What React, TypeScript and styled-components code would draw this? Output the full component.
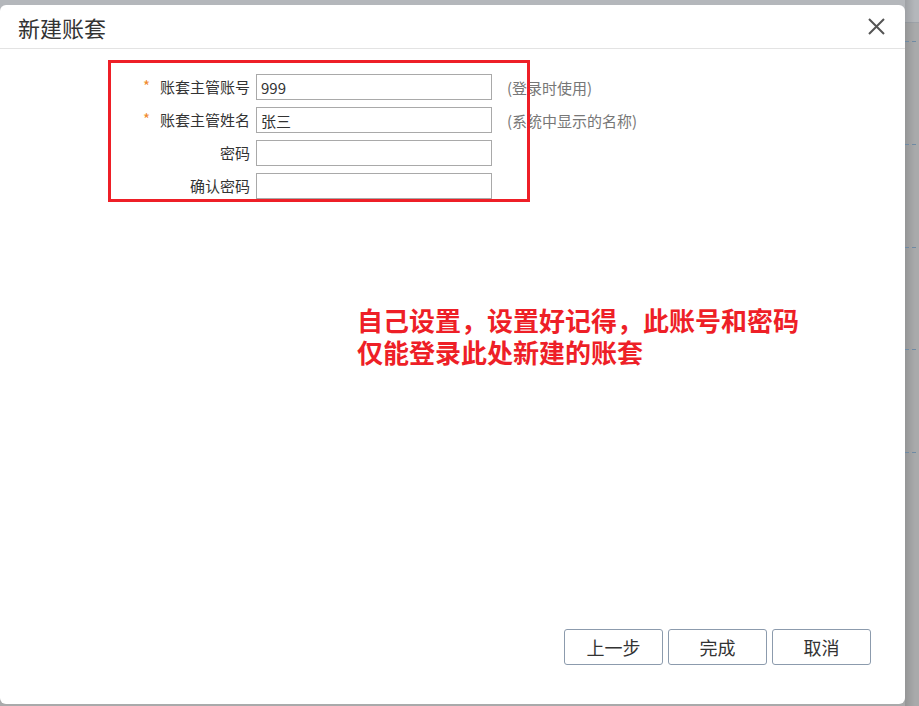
import React from "react";
import styled, { createGlobalStyle } from "styled-components";

const Global = createGlobalStyle`
  html, body { margin: 0; padding: 0; }
  body {
    width: 919px;
    height: 706px;
    overflow: hidden;
    font-family: "Noto Sans CJK SC", "Liberation Sans", sans-serif;
    background: linear-gradient(to bottom, #b4b7bb 0, #b4b7bb 22px, #9ea3a9 22px, #9ea3a9 23px, #a9aaab 23px);
  }
`;

const Page = styled.div`
  display: flex;
  align-items: flex-start;
  padding-top: 5px;
  height: 706px;
  box-sizing: border-box;
`;

const Dialog = styled.div`
  width: 905px;
  height: 699px;
  flex: none;
  background: #fff;
  border-radius: 6px;
  display: flex;
  flex-direction: column;
  box-sizing: border-box;
  position: relative;
`;

const Side = styled.div`
  flex: 1;
  align-self: stretch;
  margin-top: -5px;
  background: linear-gradient(to right, rgba(0,0,0,0.12), rgba(0,0,0,0) 10px), linear-gradient(to bottom, #b4b7bb 0, #b4b7bb 22px, #9ea3a9 22px, #9ea3a9 23px, #a9aaab 23px);
  display: flex;
  flex-direction: column;
  padding-top: 41px;
  gap: 101.75px;
`;

const Dash = styled.div`
  height: 1px;
  background: repeating-linear-gradient(to right, #6f8aa3 0 4px, transparent 4px 7px);
`;

const Header = styled.div`
  height: 43px;
  border-bottom: 1px solid #e3e3e3;
  display: flex;
  align-items: center;
  justify-content: space-between;
  padding: 0 20px 0 18px;
`;

const Title = styled.div`
  font-size: 22px;
  color: #333;
  line-height: 1;
  margin-top: 1px;
`;

const CloseBtn = styled.button`
  border: none;
  background: none;
  padding: 0;
  width: 18px;
  height: 18px;
  display: flex;
  align-items: center;
  justify-content: center;
  cursor: pointer;
`;

const Body = styled.div`
  flex: 1;
  display: flex;
  flex-direction: column;
  position: relative;
`;

const Form = styled.div`
  display: grid;
  grid-template-columns: 148px 236px auto;
  row-gap: 7px;
  margin: 25px 0 0 108px;
  align-items: center;
`;

const Label = styled.label`
  font-size: 15px;
  color: #333;
  text-align: right;
  padding-right: 6px;
  white-space: nowrap;
  line-height: 26px;
`;

const Star = styled.span`
  color: #f08a2c;
  margin-right: 10px;
  position: relative;
  top: -1px;
`;

const Input = styled.input`
  box-sizing: border-box;
  width: 236px;
  height: 26px;
  border: 1px solid #a9a9a9;
  padding: 0 4px;
  font-family: inherit;
  font-size: 15px;
  color: #333;
  outline: none;
  border-radius: 0;
`;

const Hint = styled.span`
  font-size: 15px;
  color: #777;
  margin-left: 15px;
  white-space: nowrap;
`;

const Highlight = styled.div`
  position: absolute;
  left: 108px;
  top: 11px;
  width: 422px;
  height: 142px;
  border: 3px solid #ee1f27;
  box-sizing: border-box;
  pointer-events: none;
`;

const Note = styled.div`
  margin: 105px 0 0 357px;
  display: flex;
  flex-direction: column;
`;

const NoteLine = styled.div`
  font-size: 26px;
  height: 32px;
  line-height: 32px;
  font-weight: 700;
  color: #ee1f27;
  white-space: nowrap;
`;

const Footer = styled.div`
  margin-top: auto;
  display: flex;
  justify-content: flex-end;
  gap: 5px;
  padding: 0 34px 39px 0;
`;

const Button = styled.button`
  width: 99px;
  height: 36px;
  box-sizing: border-box;
  border: 1px solid #8c9bad;
  border-radius: 3px;
  background: #fff;
  font-family: inherit;
  font-size: 18px;
  color: #333;
  cursor: pointer;
  padding: 0;
`;

const rows = [
  { label: "账套主管账号", required: true, value: "999", hint: "(登录时使用)" },
  { label: "账套主管姓名", required: true, value: "张三", hint: "(系统中显示的名称)" },
  { label: "密码", required: false, value: "", hint: "" },
  { label: "确认密码", required: false, value: "", hint: "" },
];

export default function App() {
  return (
    <>
      <Global />
      <Page>
        <Dialog>
          <Header>
            <Title>新建账套</Title>
            <CloseBtn aria-label="close">
              <svg width="17" height="17" viewBox="0 0 17 17">
                <path d="M1 1 L16 16 M16 1 L1 16" stroke="#555" strokeWidth="2" />
              </svg>
            </CloseBtn>
          </Header>
          <Body>
            <Form>
              {rows.map((r) => (
                <React.Fragment key={r.label}>
                  <Label>
                    {r.required && <Star>*</Star>}
                    {r.label}
                  </Label>
                  <Input defaultValue={r.value} type={r.label.includes("密码") ? "password" : "text"} />
                  <Hint>{r.hint}</Hint>
                </React.Fragment>
              ))}
            </Form>
            <Highlight />
            <Note>
              <NoteLine>自己设置，设置好记得，此账号和密码</NoteLine>
              <NoteLine>仅能登录此处新建的账套</NoteLine>
            </Note>
            <Footer>
              <Button>上一步</Button>
              <Button>完成</Button>
              <Button>取消</Button>
            </Footer>
          </Body>
        </Dialog>
        <Side>
          <Dash />
          <Dash />
          <Dash />
          <Dash />
          <Dash />
        </Side>
      </Page>
    </>
  );
}
